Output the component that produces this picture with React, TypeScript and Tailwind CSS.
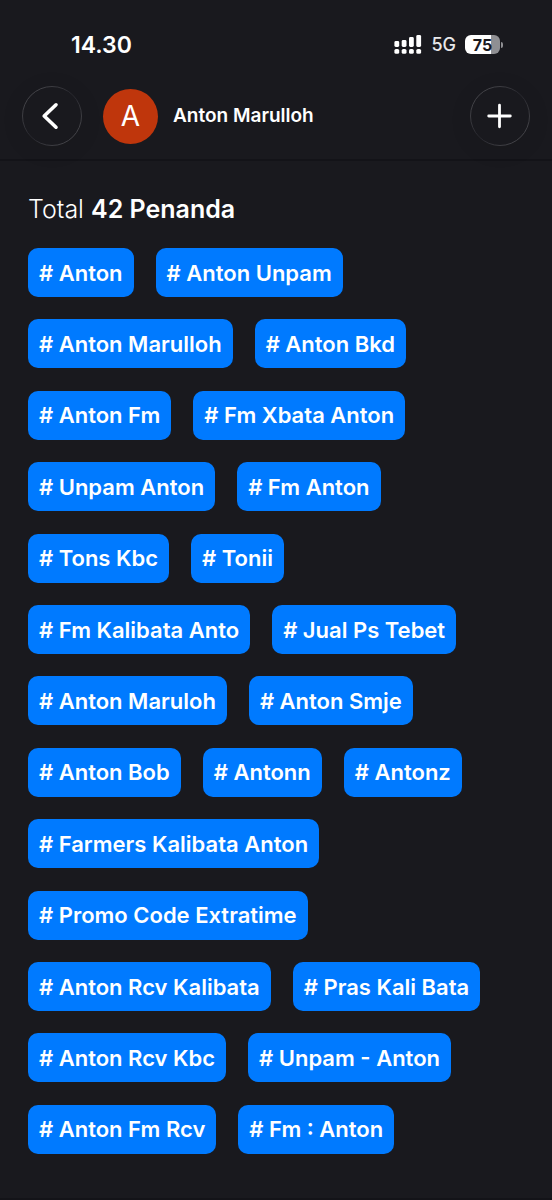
import React from "react";

const tags: string[] = [
  "Anton",
  "Anton Unpam",
  "Anton Marulloh",
  "Anton Bkd",
  "Anton Fm",
  "Fm Xbata Anton",
  "Unpam Anton",
  "Fm Anton",
  "Tons Kbc",
  "Tonii",
  "Fm Kalibata Anto",
  "Jual Ps Tebet",
  "Anton Maruloh",
  "Anton Smje",
  "Anton Bob",
  "Antonn",
  "Antonz",
  "Farmers Kalibata Anton",
  "Promo Code Extratime",
  "Anton Rcv Kalibata",
  "Pras Kali Bata",
  "Anton Rcv Kbc",
  "Unpam - Anton",
  "Anton Fm Rcv",
  "Fm : Anton",
];

function Signal() {
  const tops = [6, 5, 2, 0];
  return (
    <svg width="28" height="19" viewBox="0 0 28 19" fill="#fff" aria-hidden="true">
      {tops.map((top, i) => (
        <React.Fragment key={top}>
          <rect x={0.4 + i * 7.3} y={top} width="4.8" height={12 - top} rx="1.4" />
          <rect x={0.4 + i * 7.3} y="14" width="4.8" height="4.8" rx="1.6" />
        </React.Fragment>
      ))}
    </svg>
  );
}

function Battery() {
  return (
    <div className="flex items-center gap-px">
      <div className="flex h-[19px] w-[35px] items-center justify-center rounded-md bg-linear-to-r from-white from-75% to-[#8f8f93] to-75%">
        <span className="text-base leading-none font-bold text-[#19191e]">75</span>
      </div>
      <div className="h-[6px] w-[2px] rounded-r-full bg-[#8f8f93]" />
    </div>
  );
}

function RoundButton({ label, children }: { label: string; children: React.ReactNode }) {
  return (
    <button
      type="button"
      aria-label={label}
      className="relative flex size-[60px] shrink-0 items-center justify-center rounded-full shadow-[0_4px_24px_rgba(0,0,0,0.08)]"
    >
      <svg className="absolute inset-0" width="60" height="60" viewBox="0 0 60 60" fill="none" aria-hidden="true">
        <defs>
          <linearGradient id="rim" x1="0" y1="0" x2="1" y2="1">
            <stop offset="0" stopColor="#4c4c51" />
            <stop offset="0.25" stopColor="#3c3c41" />
            <stop offset="0.5" stopColor="#26262c" />
            <stop offset="0.75" stopColor="#3c3c41" />
            <stop offset="1" stopColor="#4c4c51" />
          </linearGradient>
        </defs>
        <circle cx="30" cy="30" r="29.5" stroke="url(#rim)" />
      </svg>
      {children}
    </button>
  );
}

export default function App() {
  return (
    <div className="flex min-h-screen flex-col border-b-2 border-[#131318] bg-[#19191e] font-['Inter',sans-serif] text-white">
      <div className="flex h-[83px] items-center justify-between pt-[6px] pr-[49px] pl-[71px]">
        <span className="text-[23px] leading-7 font-semibold">14.30</span>
        <div className="flex items-center gap-[9px]">
          <Signal />
          <span className="text-lg leading-none font-medium text-[#e8e8ea]">5G</span>
          <Battery />
        </div>
      </div>

      <header className="flex h-[78px] items-center border-b-2 border-[#131318] px-[22px] pb-[10px]">
        <RoundButton label="Kembali">
          <svg className="mr-1" width="18" height="28" viewBox="0 0 18 28" fill="none" aria-hidden="true">
            <path d="M15 2.8 L3.2 14 L15 25.2" stroke="#fff" strokeWidth="3.6" strokeLinecap="round" strokeLinejoin="round" />
          </svg>
        </RoundButton>
        <div className="ml-[21px] flex size-[55px] items-center justify-center rounded-full bg-[#bf360c] text-[28px] leading-none">
          A
        </div>
        <h1 className="ml-[15px] flex-1 text-[19px] leading-6 font-semibold">Anton Marulloh</h1>
        <RoundButton label="Tambah">
          <svg width="26" height="26" viewBox="0 0 26 26" fill="none" aria-hidden="true">
            <path d="M12.5 2.2 V23.8 M1.7 13 H23.3" stroke="#fff" strokeWidth="2.8" strokeLinecap="round" />
          </svg>
        </RoundButton>
      </header>

      <main className="flex flex-1 flex-col px-7 pt-8 pb-[44px]">
        <h2 className="mb-[23px] text-[25px] leading-8 font-light">
          Total <strong className="font-semibold">42 Penanda</strong>
        </h2>
        <ul className="flex flex-1 flex-wrap content-between gap-[22px]">
          {tags.map((tag) => (
            <li key={tag} className="flex h-[49px] items-center rounded-[10px] bg-[#007aff] px-[11px] text-[22px] leading-7 font-semibold whitespace-nowrap">
              # {tag}
            </li>
          ))}
        </ul>
      </main>
    </div>
  );
}
